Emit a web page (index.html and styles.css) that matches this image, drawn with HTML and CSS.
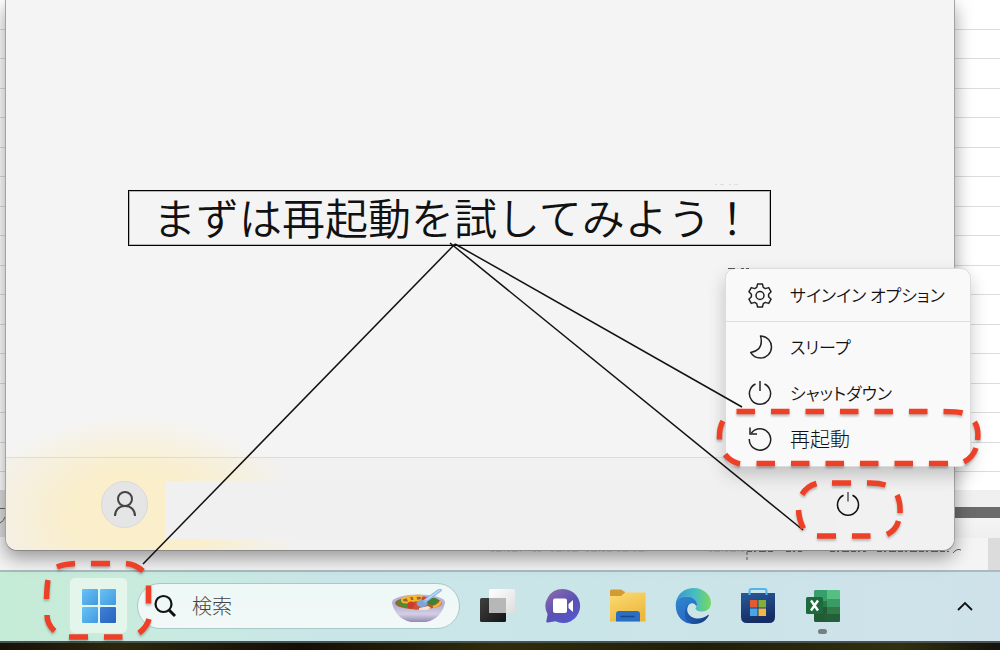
FILE: index.html
```
<!DOCTYPE html>
<html lang="ja">
<head>
<meta charset="utf-8">
<title>再起動</title>
<link rel="stylesheet" href="styles.css">
</head>
<body>
<div class="desktop">
  <main class="sheet">
    <section class="start-menu">
      <div class="start-body">
        <h1 class="callout">まずは再起動を試してみよう！</h1>
      </div>
      <div class="start-footer">
        <button class="avatar" aria-label="ユーザー">
          <svg width="24" height="28" viewBox="0 0 24 28" fill="none" stroke="#444" stroke-width="2">
            <circle cx="12" cy="9" r="7"/>
            <path d="M2 26c0-6 4-10 10-10s10 4 10 10"/>
          </svg>
        </button>
        <div class="user-name"></div>
        <div class="power-area">
          <button class="power" aria-label="電源">
            <svg width="26" height="26" viewBox="0 0 26 26" fill="none" stroke="#111" stroke-width="1.5">
              <path d="M8.500 4.200a10.500 10.500 0 1 0 9 0"/>
              <path d="M13 1v9.500" stroke="#555"/>
            </svg>
          </button>
        </div>
      </div>
      <div class="power-menu">
        <button class="item first">
          <svg width="26" height="26" viewBox="0 0 26 26" fill="none" stroke="#222" stroke-width="1.500" stroke-linejoin="round">
            <path d="M10.600 2h4.800l.9 3.400 2 1.200 3.400-1 2.400 4.200-2.500 2.400v2.600l2.500 2.400-2.400 4.200-3.400-1-2 1.200-.9 3.400h-4.800l-.9-3.400-2-1.200-3.400 1-2.400-4.200 2.500-2.400v-2.600l-2.500-2.400 2.400-4.200 3.400 1 2-1.200z"/>
            <circle cx="13" cy="13.500" r="4"/>
          </svg>
          <span class="kana">サインイン オプション</span>
        </button>
        <button class="item">
          <svg width="26" height="26" viewBox="0 0 26 26" fill="none" stroke="#222" stroke-width="1.500" stroke-linejoin="round">
            <path d="M13.500 2c7 .2 11 5.500 11 11 0 6-4.800 11-11 11-4.400 0-8-2.300-9.800-5.600 6.600-.8 10.600-5 10.600-10.800 0-2-.2-4-.8-5.600z"/>
          </svg>
          <span class="kana">スリープ</span>
        </button>
        <button class="item">
          <svg width="26" height="26" viewBox="0 0 26 26" fill="none" stroke="#222" stroke-width="1.500">
            <path d="M8.500 4a10.600 10.600 0 1 0 9 0"/>
            <path d="M13 1v10"/>
          </svg>
          <span class="kana">シャットダウン</span>
        </button>
        <button class="item">
          <svg width="26" height="26" viewBox="0 0 26 26" fill="none" stroke="#222" stroke-width="1.500">
            <path d="M2.300 13A10.700 10.700 0 1 0 4.300 7.200"/>
            <path d="M3 1.500V8h7"/>
          </svg>
          <span>再起動</span>
        </button>
      </div>
    </section>
  </main>

  <footer class="taskbar">
    <button class="start-button" aria-label="スタート">
      <svg width="36" height="36" viewBox="0 0 36 36">
        <defs>
          <linearGradient id="win" x2="1" y2="1"><stop offset="0" stop-color="#68c3f5"/><stop offset="1" stop-color="#4299e0"/></linearGradient>
          <linearGradient id="win2" x2="1" y2="1"><stop offset="0" stop-color="#3f80d8"/><stop offset="1" stop-color="#2764bf"/></linearGradient>
        </defs>
        <rect x="1" y="1" width="16" height="16" rx="1" fill="url(#win)"/>
        <rect x="19" y="1" width="16" height="16" rx="1" fill="url(#win)"/>
        <rect x="1" y="19" width="16" height="16" rx="1" fill="url(#win)"/>
        <rect x="19" y="19" width="16" height="16" rx="1" fill="url(#win2)"/>
      </svg>
    </button>
    <label class="search">
      <svg width="24" height="24" viewBox="0 0 24 24" fill="none" stroke="#111" stroke-width="2.200">
        <circle cx="9.500" cy="10" r="8"/>
        <path d="M15 16l6 6" stroke-width="3"/>
      </svg>
      <input type="text" placeholder="検索" aria-label="検索">
      <svg width="54" height="34" viewBox="0 0 54 34">
        <defs>
          <linearGradient id="bowl" x2="0" y2="1"><stop offset="0" stop-color="#aaa2cc"/><stop offset=".6" stop-color="#d4cfe3"/><stop offset="1" stop-color="#9389b3"/></linearGradient>
        </defs>
        <path d="M0 13c1 9 8 18 19 20h15c11-2 18-11 19-20z" fill="url(#bowl)"/>
        <ellipse cx="26.500" cy="13" rx="26.500" ry="7.500" fill="#b9b2d6"/>
        <ellipse cx="26.500" cy="14" rx="23.500" ry="6.500" fill="#b65a2d"/>
        <path d="M4 14c3-4 8-4 12 0l2 4c-5 1-12-1-14-4z" fill="#4c8c32"/>
        <path d="M36 11c4-3 8-3 11 1l-5 4-7-1z" fill="#3f8235"/>
        <path d="M41 18c5-1 7-3 8-6" stroke="#f0b63c" stroke-width="2.500" fill="none"/>
        <g fill="none" stroke="#f2b92c" stroke-width="2">
          <ellipse cx="14" cy="11" rx="4" ry="2.500"/><ellipse cx="20" cy="9.500" rx="4" ry="2.500"/><ellipse cx="26" cy="9" rx="4" ry="2.500"/>
        </g>
        <circle cx="19" cy="16" r="3.500" fill="#cf3a2c"/><circle cx="24" cy="18" r="2.500" fill="#dc4b38"/><circle cx="32" cy="10" r="2.500" fill="#d4452c"/>
        <path d="M27 19l9-2 3 2-4 2h-8z" fill="#f5e2cf"/>
        <ellipse cx="30" cy="14.500" rx="5.500" ry="3.500" fill="#7da5d9"/>
        <path d="M33 12L48 1" stroke="#91b8e6" stroke-width="3.500" stroke-linecap="round"/>
        <path d="M34 11L48 1" stroke="#c3dcf6" stroke-width="1.200"/>
      </svg>
    </label>
    <nav class="apps">
      <button aria-label="タスク ビュー">
        <svg width="36" height="36" viewBox="0 0 36 36">
          <defs>
            <linearGradient id="tv" x2="1" y2="1"><stop offset="0" stop-color="#404040"/><stop offset="1" stop-color="#151515"/></linearGradient>
            <linearGradient id="tv2" x2="1" y2="1"><stop offset="0" stop-color="#fff"/><stop offset="1" stop-color="#ddd"/></linearGradient>
          </defs>
          <rect x="0" y="10" width="26" height="24" rx="1.500" fill="url(#tv)"/>
          <rect x="9" y="1" width="26" height="24" rx="1.500" fill="url(#tv2)"/>
          <path d="M9 10h17v15H9z" fill="#b7b7b7"/>
        </svg>
      </button>
      <button aria-label="チャット">
        <svg width="36" height="36" viewBox="0 0 36 36">
          <defs><linearGradient id="chat" x1=".1" x2=".8" y2="1"><stop offset="0" stop-color="#8e6aab"/><stop offset=".55" stop-color="#5a51b3"/><stop offset="1" stop-color="#5558d0"/></linearGradient></defs>
          <path d="M18 1a17 17 0 1 1-7.500 32.200L3 34.500c-1.500.3-2-.5-1.600-1.800l1.200-6.500A17 17 0 0 1 18 1z" fill="url(#chat)"/>
          <rect x="8" y="10.500" width="14" height="14.500" rx="2" fill="#fff"/>
          <path d="M23.500 16l4.500-4v12l-4.500-4z" fill="#fff"/>
        </svg>
      </button>
      <button aria-label="エクスプローラー">
        <svg width="36" height="36" viewBox="0 0 36 36">
          <defs><linearGradient id="folder" x2=".5" y2="1"><stop offset="0" stop-color="#fbdc72"/><stop offset="1" stop-color="#edb83f"/></linearGradient></defs>
          <path d="M0 3q0-1.500 1.500-1.500H11L15 4v4H0z" fill="#d39c32"/>
          <path d="M0 8h11l4-3.500h19.500q1 0 1 1V33.500H0z" fill="url(#folder)"/>
          <path d="M6 33.500V26q0-3 3-3h18q3 0 3 3v7.500z" fill="#2b6fc5"/>
          <path d="M10.500 28.500h14" stroke="#164788" stroke-width="1.500"/>
        </svg>
      </button>
      <button aria-label="Edge">
        <svg width="36" height="36" viewBox="0 0 36 36">
          <defs>
            <linearGradient id="e1" x1="0" y1=".5" x2="1" y2=".5"><stop offset="0" stop-color="#3497d3"/><stop offset=".55" stop-color="#47bec0"/><stop offset="1" stop-color="#79d95d"/></linearGradient>
            <linearGradient id="e2" x2=".5" y2="1"><stop offset="0" stop-color="#3287ce"/><stop offset="1" stop-color="#2368c6"/></linearGradient>
            <linearGradient id="e3" x2="1"><stop offset="0" stop-color="#205dae"/><stop offset="1" stop-color="#153e80"/></linearGradient>
          </defs>
          <path d="M1 14C3 5 10 0 19 0c9.500 0 17 7 17 15 0 5-4 8.500-9 8.500-4 0-6.500-1.500-6.500-3 0-1.200 1.500-1.700 1.500-4C22 12 17 8.500 11 8.500 6.500 8.500 3 10.500 1 14z" fill="url(#e1)"/>
          <path d="M1 14c2-4 6-5.500 10-5.500 6 0 11 3.500 11 8l-.7 2C19 13 13 15 12 21c-1 7 3 13 10 14.500C10 38-1 29 1 14z" fill="url(#e2)"/>
          <path d="M14 15.500c-5 8 1 15 9 15 4 0 7-1.500 10-3.500.8-.4 1 .2.700.8C31.500 32 27 36 20 36c-8.500 0-12-8-9.500-14.500.8-2.500 2-4.600 3.500-6z" fill="url(#e3)"/>
        </svg>
      </button>
      <button aria-label="Microsoft Store">
        <svg width="36" height="36" viewBox="0 0 36 36">
          <defs><linearGradient id="store" x2=".3" y2="1"><stop offset="0" stop-color="#285a9a"/><stop offset="1" stop-color="#162d63"/></linearGradient></defs>
          <path d="M1 5h34v24q0 6-6 6H7q-6 0-6-6z" fill="url(#store)"/>
          <path d="M9.500 7V3q0-2 2-2h13q2 0 2 2v4" fill="none" stroke="#51b5ed" stroke-width="2"/>
          <path d="M10 12h7.500v7.500H10z" fill="#e35b32"/><path d="M18.500 12H26v7.500h-7.500z" fill="#7fb13a"/>
          <path d="M10 20.500h7.500V28H10z" fill="#46a6ea"/><path d="M18.500 20.500H26V28h-7.500z" fill="#f5b83d"/>
        </svg>
      </button>
      <button class="running" aria-label="Excel">
        <svg width="36" height="36" viewBox="0 0 36 36">
          <path d="M10 2h13v11H9V3z" fill="#37a06a"/><path d="M22 2h12q1 0 1 1v10H22z" fill="#55bf82"/>
          <path d="M9 13h13v6H9z" fill="#27794a"/><path d="M22 11h13v8H22z" fill="#3a9b64"/>
          <path d="M9 19h13v15H10l-1-1z" fill="#215c35"/><path d="M22 19h13v7H22z" fill="#2f7a46"/><path d="M20 26h15v7q0 1-1 1H20z" fill="#235f38"/>
          <rect x="1" y="9" width="17" height="17" rx="1.500" fill="#1d6b3c"/>
          <path d="M6 12.500l7 10M13 12.500l-7 10" stroke="#fff" stroke-width="2.400"/>
        </svg>
      </button>
    </nav>
    <button class="tray" aria-label="隠れているインジケーター">
      <svg width="18" height="12" viewBox="0 0 18 12" fill="none" stroke="#111" stroke-width="1.800"><path d="M2 10l7-7 7 7"/></svg>
    </button>
  </footer>
  <div class="wallpaper"></div>

  <svg class="marks" width="1000" height="650" viewBox="0 0 1000 650" fill="none">
    <!-- clipped text left over from the sheet -->
    <g stroke="#555" stroke-width="1">
      <path d="M491 551.500h30M533 551.500h8M551 551.500h28M586 551.500h26M617 551.500h32M709 551.500h36" stroke-dasharray="3 2 6 2 1 2" stroke="#999"/>
      <path d="M747 551.500h26M786 551.500h16M830 551.500h36M877 551.500h74" stroke-dasharray="5 2 2 3 7 2"/>
      <path d="M747 552v9" stroke-dasharray="3 2"/>
      <path d="M953 553q4-5 8-3M0 508.500h5M0 523q4-2 5-6M728 268.500h7M741 268.500h3M746 268.500h3"/>
      <path d="M715 184.500h24" stroke="#ddd" stroke-dasharray="2 3 4 5"/>
    </g>
    <g stroke="#111" stroke-width="1.500">
      <path d="M455 244L143 564"/>
      <path d="M450 243L803 530"/>
      <path d="M455 244L742 407"/>
    </g>
    <g class="dashes" stroke="#ed4026" stroke-width="5.500">
      <path d="M57 567Q64 564 75 563.500M91 563.500h19M126 563.500Q135 564 143 571M148.500 585.500v18M149 619Q147 627 139 633M122.500 637h-18.500M88 637h-19M54.500 631Q47 624 47 615M46.500 599Q47 586 48 580"/>
      <path d="M736.500 411.500h18.500M771 411.500h18.500M805.500 411.500h18.500M840 411.500h18.500M874.500 411.500h18.500M909 411.500h18.500M943.500 411.500q14 0 19 1.500M974.500 422Q979 429 977.500 440M976 448Q973 457 964 462M948 463.500h-19M913 463.500h-18.500M878.500 463.500h-18.500M844 463.500h-18.500M809.500 463.500h-18.500M775 463.500h-18.500M740 464Q731 462 725 454.500M719.500 439.500Q719 428 723 421"/>
      <path d="M802 494.500Q807 486 816.500 483.500M832 483h19M867 483Q878 482.500 885.500 485M897 495Q900.500 502 900 513M898.500 521Q896 530 887 534.500M870.500 536h-18.500M836 536h-19M803.500 528.500Q799 520 798.500 510"/>
    </g>
  </svg>
</div>
</body>
</html>
```

FILE: styles.css
```
* {
  box-sizing: border-box;
}

body {
  margin: 0;
  font-family: "Noto Sans CJK JP", "Liberation Sans", sans-serif;
  font-size: 20px;
  font-weight: 300;
  color: #111;
}

button {
  font: inherit;
  color: inherit;
  border: none;
  background: none;
  padding: 0;
  cursor: pointer;
}

svg {
  display: block;
  flex: none;
}

.desktop {
  position: relative;
  display: flex;
  flex-direction: column;
  height: 100vh;
  overflow: hidden;
}

/* spreadsheet behind the start menu */
.sheet {
  flex: 1;
  display: flex;
  padding: 0 45px 19px 5px;
  background:
    linear-gradient(#dcdcdc, #dcdcdc) right bottom / 12px 32px no-repeat,
    linear-gradient(transparent 490px, #dedede 490px, #dedede 537px, #f4f4f4 537px) left top / 5px 100% no-repeat,
    linear-gradient(transparent 490px, #f0f0f0 490px, #f0f0f0 507px, #6b6b6b 507px, #6b6b6b 518px, #f4f4f4 518px, #efefef 538px, #f4f4f4 538px),
    repeating-linear-gradient(#fff 0, #fff 29px, #dcdcdc 29px, #dcdcdc 30px, #fff 30px, #fff 58px, #dcdcdc 58px, #dcdcdc 59px);
}

.start-menu {
  position: relative;
  flex: 1;
  display: flex;
  flex-direction: column;
  border: 1px solid #a2a2a2;
  border-top: none;
  border-bottom-color: #888;
  border-radius: 0 0 12px 12px;
  background: radial-gradient(ellipse 160px 95px at 125px 510px, #faeecb 40%, rgba(250, 238, 203, 0)), #f4f4f4;
  box-shadow: 0 7px 18px rgba(0, 0, 0, 0.38);
}

.start-body {
  flex: 1;
  padding: 190px 0 0 122px;
}

.callout {
  width: fit-content;
  margin: 0;
  padding: 0 16px 4px 24px;
  border: 1px solid #000;
  outline: 1px solid rgba(0, 0, 0, 0.25);
  outline-offset: -2px;
  font-size: 43px;
  line-height: 50px;
  font-weight: 350;
}

.start-footer {
  display: flex;
  align-items: center;
  height: 93px;
  padding-left: 95px;
  border-top: 1px solid #dcdcdc;
  border-radius: 0 0 12px 12px;
  background: radial-gradient(ellipse 170px 120px at 130px 60px, rgba(250, 238, 203, 0.8) 40%, rgba(240, 240, 240, 0.8));
}

.avatar {
  display: flex;
  align-items: center;
  justify-content: center;
  width: 47px;
  height: 47px;
  border: 1px solid #d8d9dc;
  border-radius: 50%;
  background: #e5e5e5;
}

.user-name {
  flex: 1;
  height: 58px;
  margin: 12px 0 0 17px;
  background: #f0f0f0;
}

.power-area {
  padding: 0 93px 0 0;
}

.power {
  display: block;
}

.power-menu {
  position: absolute;
  right: -17px;
  bottom: 83px;
  width: 246px;
  padding-bottom: 4px;
  border: 1px solid #dcdcdc;
  border-radius: 10px;
  background: #f9f9f9;
  box-shadow: 0 8px 18px rgba(0, 0, 0, 0.2);
}

.item {
  display: flex;
  align-items: center;
  gap: 17px;
  width: 100%;
  height: 46px;
  padding-left: 21px;
  line-height: 28px;
  white-space: nowrap;
}

.kana {
  font-size: 17px;
  font-weight: 350;
  font-feature-settings: "palt";
}

.item.first {
  height: 53px;
  margin-bottom: 2px;
  border-bottom: 1px solid #dedede;
}

.taskbar {
  display: flex;
  align-items: center;
  height: 71px;
  padding: 0 26px 2px 69px;
  border-top: 2px solid #aabbc0;
  background: linear-gradient(90deg, #c5ecd6, #c9ebdf 15%, #c8e6e7 32%, #cae5e8 60%, #cfe2ea);
}

.start-button {
  display: flex;
  align-items: center;
  justify-content: center;
  width: 59px;
  height: 57px;
  border: 1px solid #d2e8db;
  border-radius: 6px;
  background: #e4f5ec;
}

.search {
  display: flex;
  align-items: center;
  width: 323px;
  height: 46px;
  margin: 0 5px 0 9px;
  padding: 0 13px 0 16px;
  border: 1px solid #a9c9c8;
  border-radius: 23px;
  background: linear-gradient(#edf8f7, #f2f8f8);
}

.search input {
  flex: 1;
  min-width: 0;
  height: 30px;
  padding: 0 14px;
  border: none;
  outline: none;
  background: none;
  font: inherit;
}

.search input::placeholder {
  color: #444;
  opacity: 1;
}

.apps {
  display: flex;
}

.apps button {
  position: relative;
  display: flex;
  justify-content: center;
  width: 65px;
}

.running::after {
  content: "";
  position: absolute;
  bottom: -10px;
  width: 9px;
  height: 5px;
  border-radius: 3px;
  background: #777f84;
}

.tray {
  margin-left: auto;
}

.wallpaper {
  height: 9px;
  border-top: 2px solid #4b5152;
  background: linear-gradient(90deg, #171006, #2c270b 12%, #140d05 30%, #302c0a 50%, #201d07 70%, #30300d 90%, #14120a);
}

.marks {
  position: absolute;
  top: 0;
  left: 0;
  pointer-events: none;
}

.dashes {
  filter: drop-shadow(0 2px 1px rgba(0, 0, 0, 0.25));
}
```
